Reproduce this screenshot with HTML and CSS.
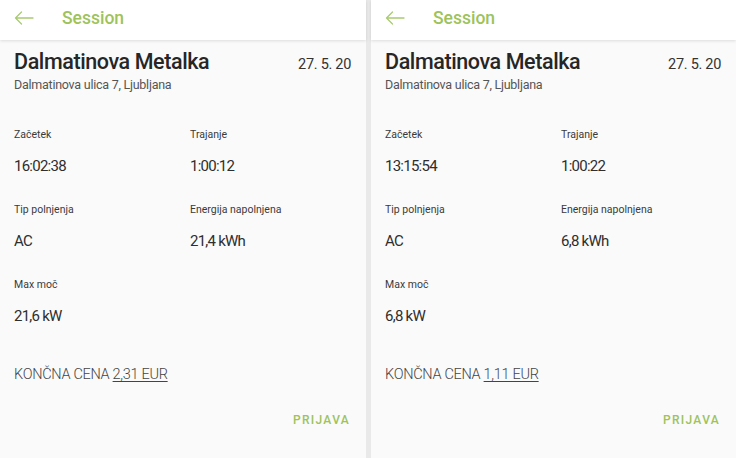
FILE: index.html
```html
<!DOCTYPE html>
<html lang="sl">
<head>
<meta charset="utf-8">
<title>Session</title>
<link rel="stylesheet" href="styles.css">
</head>
<body>
<div class="screens">
  <section class="panel panel-left">
    <header class="appbar">
      <svg class="back" width="20" height="14" viewBox="0 0 20 14" aria-hidden="true"><path d="M19 7H1.5M7.5 1L1.5 7l6 6" fill="none" stroke="currentColor" stroke-width="1.3" stroke-linecap="round" stroke-linejoin="round"/></svg>
      <span class="appbar-title">Session</span>
    </header>
    <main class="content">
      <div class="head">
        <h1 class="name">Dalmatinova Metalka</h1>
        <span class="date">27. 5. 20</span>
      </div>
      <p class="address">Dalmatinova ulica 7, Ljubljana</p>
      <div class="facts">
        <div class="fact"><span class="label">Začetek</span><span class="value">16:02:38</span></div>
        <div class="fact"><span class="label">Trajanje</span><span class="value">1:00:12</span></div>
        <div class="fact"><span class="label">Tip polnjenja</span><span class="value">AC</span></div>
        <div class="fact"><span class="label">Energija napolnjena</span><span class="value">21,4 kWh</span></div>
        <div class="fact"><span class="label">Max moč</span><span class="value">21,6 kW</span></div>
      </div>
      <p class="price">KONČNA CENA <span class="amount">2,31 EUR</span></p>
      <div class="actions"><span class="btn">PRIJAVA</span></div>
    </main>
  </section>
  <section class="panel panel-right">
    <header class="appbar">
      <svg class="back" width="20" height="14" viewBox="0 0 20 14" aria-hidden="true"><path d="M19 7H1.5M7.5 1L1.5 7l6 6" fill="none" stroke="currentColor" stroke-width="1.3" stroke-linecap="round" stroke-linejoin="round"/></svg>
      <span class="appbar-title">Session</span>
    </header>
    <main class="content">
      <div class="head">
        <h1 class="name">Dalmatinova Metalka</h1>
        <span class="date">27. 5. 20</span>
      </div>
      <p class="address">Dalmatinova ulica 7, Ljubljana</p>
      <div class="facts">
        <div class="fact"><span class="label">Začetek</span><span class="value">13:15:54</span></div>
        <div class="fact"><span class="label">Trajanje</span><span class="value">1:00:22</span></div>
        <div class="fact"><span class="label">Tip polnjenja</span><span class="value">AC</span></div>
        <div class="fact"><span class="label">Energija napolnjena</span><span class="value">6,8 kWh</span></div>
        <div class="fact"><span class="label">Max moč</span><span class="value">6,8 kW</span></div>
      </div>
      <p class="price">KONČNA CENA <span class="amount">1,11 EUR</span></p>
      <div class="actions"><span class="btn">PRIJAVA</span></div>
    </main>
  </section>
</div>
</body>
</html>
```
FILE: styles.css
```css
* { box-sizing: border-box; }
html, body { margin: 0; padding: 0; }
body {
  width: 736px;
  height: 458px;
  overflow: hidden;
  background: #e9e9e9;
  font-family: Roboto, "Liberation Sans", sans-serif;
  color: #222;
}
.screens {
  display: flex;
  gap: 5px;
  height: 458px;
}
.panel {
  display: flex;
  flex-direction: column;
  background: #fafafa;
  height: 100%;
}
.panel-left { width: 366px; }
.panel-right { width: 365px; }
.appbar {
  position: relative;
  z-index: 1;
  height: 40px;
  flex: none;
  background: #fff;
  box-shadow: 0 1px 3px rgba(0,0,0,0.12);
  display: flex;
  align-items: center;
  padding-left: 14px;
  color: #a9cc70;
}
.back { display: block; margin-top: -4px; }
.appbar-title {
  margin-left: 28px;
  margin-top: -4px;
  font-size: 17.5px;
  font-weight: 500;
  color: #9dc35a;
}
.content {
  padding: 8px 15px 0 14px;
  flex: 1;
}
.head {
  display: flex;
  justify-content: space-between;
  align-items: baseline;
}
.name {
  margin: 0;
  font-size: 21.5px;
  line-height: 28px;
  font-weight: 500;
  letter-spacing: -0.4px;
  color: #262626;
}
.date {
  font-size: 14.5px;
  letter-spacing: -0.3px;
  color: #333;
}
.address {
  margin: 0;
  font-size: 12.5px;
  line-height: 18px;
  letter-spacing: -0.25px;
  color: #555;
}
.facts {
  margin-top: 33px;
  display: grid;
  grid-template-columns: 176px 1fr;
  row-gap: 26px;
}
.fact {
  display: flex;
  flex-direction: column;
}
.label {
  font-size: 10.5px;
  line-height: 16px;
  color: #3a3a3a;
}
.value {
  margin-top: 13px;
  font-size: 15px;
  line-height: 20px;
  letter-spacing: -0.75px;
  color: #2e2e2e;
}
.price {
  margin: 39px 0 0;
  font-size: 14.5px;
  line-height: 20px;
  font-weight: 300;
  letter-spacing: -0.3px;
  color: #444;
}
.amount { text-decoration: underline; text-underline-offset: 2px; }
.actions {
  margin-top: 27px;
  display: flex;
  justify-content: flex-end;
}
.btn {
  font-size: 12px;
  line-height: 16px;
  font-weight: 500;
  letter-spacing: 1.3px;
  color: #9dc35a;
  margin-right: 1px;
}
```
